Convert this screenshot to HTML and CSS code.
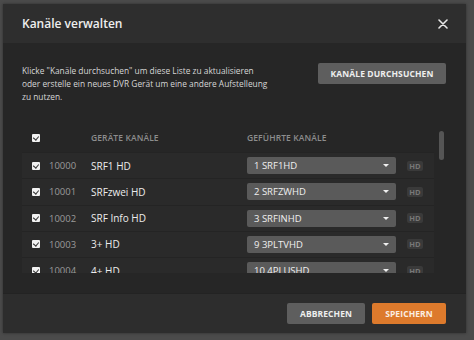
FILE: index.html
```html
<!DOCTYPE html>
<html lang="de">
<head>
<meta charset="utf-8">
<link rel="stylesheet" href="styles.css">
</head>
<body>
<div class="dialog">
  <div class="header">
    <h1 class="title">Kanäle verwalten</h1>
    <button class="close" aria-label="Schließen">
      <svg width="10" height="10" viewBox="0 0 10 10"><path d="M1 1L9 9M9 1L1 9" stroke="#e6e6e6" stroke-width="1.6" stroke-linecap="round"/></svg>
    </button>
  </div>
  <div class="body">
    <div class="intro">
      <p class="intro-text">Klicke "Kanäle durchsuchen" um diese Liste zu aktualisieren oder erstelle ein neues DVR Gerät um eine andere Aufstelleung zu nutzen.</p>
      <button class="btn btn-gray btn-scan">KANÄLE DURCHSUCHEN</button>
    </div>
    <div class="table-wrap">
      <div class="list">
        <div class="row head">
          <span class="cb"></span>
          <span></span>
          <span class="col-label">GERÄTE KANÄLE</span>
          <span class="col-label">GEFÜHRTE KANÄLE</span>
          <span></span>
        </div>
        <div class="row item">
          <span class="cb"></span>
          <span class="num">10000</span>
          <span class="name">SRF1 HD</span>
          <span class="select">1 SRF1HD<i class="caret"></i></span>
          <span class="hd">HD</span>
        </div>
        <div class="row item">
          <span class="cb"></span>
          <span class="num">10001</span>
          <span class="name">SRFzwei HD</span>
          <span class="select">2 SRFZWHD<i class="caret"></i></span>
          <span class="hd">HD</span>
        </div>
        <div class="row item">
          <span class="cb"></span>
          <span class="num">10002</span>
          <span class="name">SRF Info HD</span>
          <span class="select">3 SRFINHD<i class="caret"></i></span>
          <span class="hd">HD</span>
        </div>
        <div class="row item">
          <span class="cb"></span>
          <span class="num">10003</span>
          <span class="name">3+ HD</span>
          <span class="select">9 3PLTVHD<i class="caret"></i></span>
          <span class="hd">HD</span>
        </div>
        <div class="row item">
          <span class="cb"></span>
          <span class="num">10004</span>
          <span class="name">4+ HD</span>
          <span class="select">10 4PLUSHD<i class="caret"></i></span>
          <span class="hd">HD</span>
        </div>
      </div>
      <div class="track"><div class="thumb"></div></div>
    </div>
  </div>
  <div class="footer">
    <button class="btn btn-gray">ABBRECHEN</button>
    <button class="btn btn-orange">SPEICHERN</button>
  </div>
</div>
</body>
</html>
```

FILE: styles.css
```css
* { box-sizing: border-box; }
html, body { margin: 0; padding: 0; }
body {
  width: 474px;
  height: 340px;
  overflow: hidden;
  background: #4b4b4b;
  font-family: "Open Sans", "Noto Sans", sans-serif;
  padding: 4px 0 0 3px;
}
.dialog {
  width: 463px;
  height: 329px;
  display: flex;
  flex-direction: column;
  background: #262626;
  box-shadow: 0 0 3px rgba(0,0,0,0.4);
}
.header {
  height: 39px;
  flex: none;
  display: flex;
  align-items: center;
  justify-content: space-between;
  padding: 0 15px 0 19px;
  background: #2e2e2e;
}
.title {
  margin: 0;
  font-size: 12px;
  font-weight: 600;
  color: #eeeeee;
}
.close {
  border: 0;
  background: none;
  padding: 0;
  width: 16px;
  height: 16px;
  display: flex;
  align-items: center;
  justify-content: center;
}
.body {
  flex: 1;
  padding: 20px 20px 0 19px;
  display: flex;
  flex-direction: column;
  overflow: hidden;
}
.intro {
  display: flex;
  justify-content: space-between;
  align-items: flex-start;
}
.intro-text {
  margin: 1px 0 0 0;
  width: 250px;
  font-size: 8.35px;
  line-height: 13.2px;
  color: #d6d6d6;
}
.btn {
  border: 0;
  border-radius: 2px;
  font-family: "Open Sans", "Noto Sans", sans-serif;
  font-weight: 700;
  font-size: 8.5px;
  color: #eeeeee;
  height: 21px;
  padding: 0;
  letter-spacing: 0.1px;
}
.btn-gray { background: #5e5e5e; }
.btn-orange { background: #dd7a2c; color: #fbeee2; }
.btn-scan { width: 128px; }
.table-wrap {
  margin-top: 20px;
  display: flex;
  gap: 5px;
  height: 149px;
}
.list {
  width: 412px;
  overflow: hidden;
}
.row {
  display: grid;
  grid-template-columns: 17px 42px 156px 149px 27px;
  align-items: center;
  padding-left: 10px;
}
.row > :nth-child(5) { margin-left: 11px; width: 16px; }
.head {
  height: 28.5px;
}
.item {
  height: 26.25px;
  background: #2a2a2a;
  border-top: 1px solid #242424;
}
.cb {
  width: 8px;
  height: 8px;
  background: #f2f2f2;
  border-radius: 1px;
  position: relative;
}
.cb::after {
  content: "";
  position: absolute;
  left: 2px;
  top: 1px;
  width: 3px;
  height: 4px;
  border-right: 1.3px solid #333;
  border-bottom: 1.3px solid #333;
  transform: rotate(40deg);
}
.col-label {
  font-size: 8.5px;
  font-weight: 600;
  color: #8d8d8d;
  letter-spacing: 0.1px;
}
.head .col-label:first-of-type { margin-left: -1px; }
.num {
  font-size: 9.5px;
  color: #9a9a9a;
}
.name {
  font-size: 10px;
  color: #ececec;
}
.select {
  height: 17px;
  border-radius: 2px;
  background: #5a5a5a;
  color: #f0f0f0;
  font-size: 9.5px;
  display: flex;
  align-items: center;
  justify-content: space-between;
  padding: 0 7px;
}
.caret {
  width: 0;
  height: 0;
  border-left: 3px solid transparent;
  border-right: 3px solid transparent;
  border-top: 3px solid #f0f0f0;
}
.hd {
  height: 10px;
  border-radius: 2px;
  background: #3a3a3a;
  color: #777777;
  font-size: 7.5px;
  font-weight: 700;
  line-height: 10px;
  display: flex;
  align-items: center;
  justify-content: center;
}
.track {
  width: 5px;
  padding-top: 7px;
}
.thumb {
  width: 5px;
  height: 29px;
  border-radius: 3px;
  background: #555555;
}
.footer {
  height: 40px;
  flex: none;
  display: flex;
  justify-content: flex-end;
  align-items: center;
  gap: 7px;
  padding: 0 20px 1px 0;
  background: #2d2d2d;
  border-top: 1px solid #232323;
}
.footer .btn-gray { width: 78px; }
.footer .btn-orange { width: 74px; }
```
